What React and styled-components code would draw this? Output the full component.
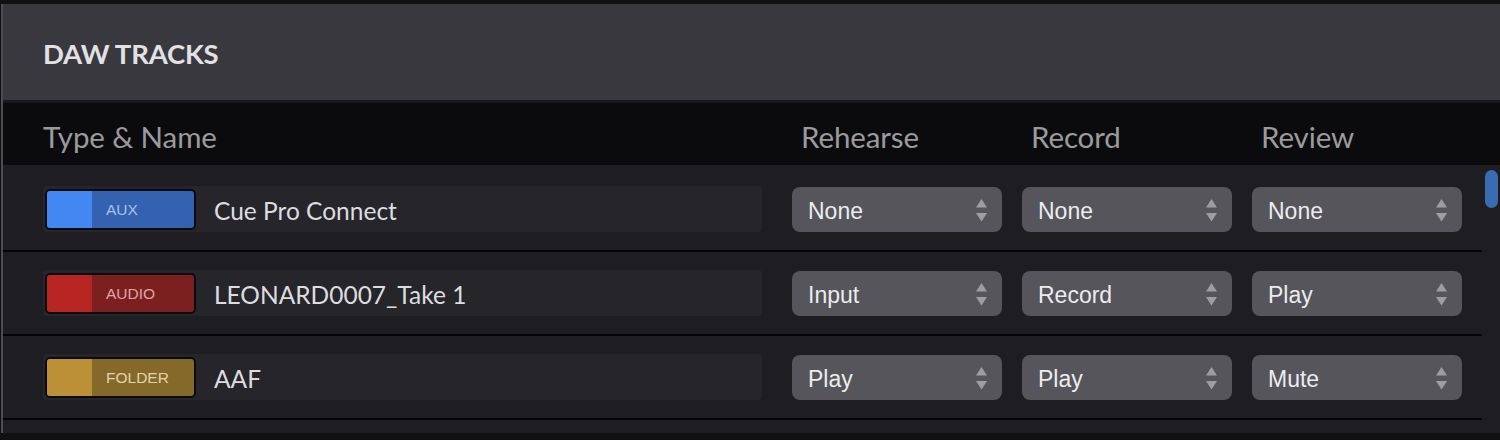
import React from "react";
import styled, { createGlobalStyle } from "styled-components";

const Global = createGlobalStyle`
  html, body {
    margin: 0;
    padding: 0;
    background: #101012;
  }
  body {
    font-family: Lato, "Liberation Sans", sans-serif;
    height: 440px;
    overflow: hidden;
  }
`;

const Panel = styled.div`
  margin-top: 4px;
  margin-left: 1px;
  border-left: 2px solid #4c4c51;
  display: flex;
  flex-direction: column;
`;

const TitleBar = styled.div`
  height: 96px;
  background: #39383e;
  display: flex;
  align-items: center;
  padding-left: 40px;
  padding-top: 2px;
  box-sizing: border-box;
`;

const Title = styled.h1`
  margin: 0;
  font-family: Lato, sans-serif;
  font-weight: 700;
  font-size: 27.5px;
  color: #e2e2e5;
  letter-spacing: -0.2px;
`;

const Columns = styled.div`
  display: grid;
  grid-template-columns: 729px repeat(3, 210px);
  column-gap: 20px;
  align-items: center;
  padding-left: 40px;
`;

const HeaderRow = styled(Columns)`
  height: 65px;
  box-sizing: border-box;
  background: #0b0b0d;
  border-top: 3px solid #18181b;
  padding-top: 4px;
`;

const HeaderLabel = styled.div`
  font-family: Lato, sans-serif;
  font-size: 29.5px;
  color: #9b9b9e;
  padding-left: ${(p) => (p.$first ? "0" : "9px")};
  letter-spacing: -0.1px;
`;

const Body = styled.div`
  display: flex;
  background: #1e1e22;
  padding-top: 3px;
  padding-bottom: 13px;
`;

const List = styled.div`
  flex: 1;
`;

const Row = styled(Columns)`
  height: 82px;
  border-bottom: 2px solid #050506;
`;

const NameCell = styled.div`
  margin-right: 10px;
  height: 46px;
  background: #26262a;
  border-radius: 4px;
  display: flex;
  align-items: center;
  gap: 18px;
  padding-left: 2px;
`;

const Badge = styled.div`
  width: 151px;
  height: 41px;
  box-sizing: border-box;
  border: 2px solid #0a0a12;
  border-radius: 5px;
  background: ${(p) => p.$body};
  display: flex;
  align-items: center;
  overflow: hidden;
`;

const Swatch = styled.div`
  width: 45px;
  align-self: stretch;
  background: ${(p) => p.$color};
`;

const BadgeLabel = styled.span`
  font-family: "Liberation Sans", Arial, sans-serif;
  font-size: 15.5px;
  color: ${(p) => p.$color};
  padding-left: 14px;
  padding-top: 2px;
`;

const TrackName = styled.span`
  font-family: Lato, sans-serif;
  font-size: 24.5px;
  color: #dddde0;
  padding-top: 3px;
`;

const Select = styled.div`
  height: 45px;
  width: 210px;
  box-sizing: border-box;
  background: #55555b;
  border-radius: 8px;
  display: flex;
  align-items: center;
  justify-content: space-between;
  padding: 2px 15px 0 16px;
`;

const SelectText = styled.span`
  font-family: "Liberation Sans", Arial, sans-serif;
  font-size: 23px;
  color: #ececee;
  padding-top: 3px;
`;

const ScrollTrack = styled.div`
  width: 18px;
  padding-top: 2px;
  display: flex;
  justify-content: center;
  align-items: flex-start;
`;

const Thumb = styled.div`
  width: 13px;
  height: 38px;
  border-radius: 7px;
  background: #3a6cb2;
`;

const Arrows = () => (
  <svg width="11" height="23" viewBox="0 0 11 23">
    <path d="M5.5 0 L11 8.5 L0 8.5 Z" fill="#9d9da2" />
    <path d="M0 14 L11 14 L5.5 22.5 Z" fill="#9d9da2" />
  </svg>
);

const tracks = [
  {
    type: "AUX",
    name: "Cue Pro Connect",
    swatch: "#4387f2",
    body: "#3462b0",
    label: "#a8c1ec",
    values: ["None", "None", "None"],
  },
  {
    type: "AUDIO",
    name: "LEONARD0007_Take 1",
    swatch: "#b62522",
    body: "#7c1f1f",
    label: "#dca6a6",
    values: ["Input", "Record", "Play"],
  },
  {
    type: "FOLDER",
    name: "AAF",
    swatch: "#bb9036",
    body: "#84692b",
    label: "#e4d3ab",
    values: ["Play", "Play", "Mute"],
  },
];

export default function App() {
  return (
    <>
      <Global />
      <Panel>
        <TitleBar>
          <Title>DAW TRACKS</Title>
        </TitleBar>
        <HeaderRow>
          <HeaderLabel $first>Type &amp; Name</HeaderLabel>
          <HeaderLabel>Rehearse</HeaderLabel>
          <HeaderLabel>Record</HeaderLabel>
          <HeaderLabel>Review</HeaderLabel>
        </HeaderRow>
        <Body>
          <List>
            {tracks.map((t) => (
              <Row key={t.name}>
                <NameCell>
                  <Badge $body={t.body}>
                    <Swatch $color={t.swatch} />
                    <BadgeLabel $color={t.label}>{t.type}</BadgeLabel>
                  </Badge>
                  <TrackName>{t.name}</TrackName>
                </NameCell>
                {t.values.map((v, i) => (
                  <Select key={i}>
                    <SelectText>{v}</SelectText>
                    <Arrows />
                  </Select>
                ))}
              </Row>
            ))}
          </List>
          <ScrollTrack>
            <Thumb />
          </ScrollTrack>
        </Body>
      </Panel>
    </>
  );
}
